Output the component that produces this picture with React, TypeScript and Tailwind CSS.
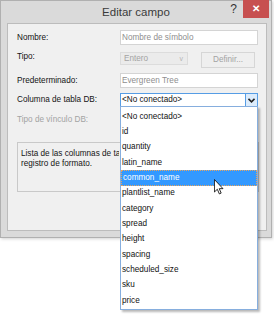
const items = [
  "<No conectado>",
  "id",
  "quantity",
  "latin_name",
  "common_name",
  "plantlist_name",
  "category",
  "spread",
  "height",
  "spacing",
  "scheduled_size",
  "sku",
  "price",
];

const Row = ({ label, disabled, children, className }: { label: string; disabled?: boolean; children?: React.ReactNode; className: string }) => (
  <div className={`flex items-center ${className}`}>
    <div className={`w-[103px] shrink-0 pl-[9px] box-content ${disabled ? "text-[#a3a3a3]" : "text-[#141414]"}`}>{label}</div>
    {children}
  </div>
);

const App = () => {
  return (
    <div className="min-h-screen bg-white text-[8.2px] leading-[10px]" style={{ fontFamily: '"Liberation Sans", Arial, sans-serif' }}>
      <div className="relative w-[272px] h-[238px] bg-[#dadada] border border-[#b0b0b0] shadow-[1px_1px_3px_rgba(0,0,0,0.18)]">
        {/* title bar */}
        <div className="h-[22px] flex items-center justify-center text-[11.5px] text-[#3a3a3a]">Editar campo</div>
        <div className="absolute top-[1px] right-[34px] text-[12px] leading-[14px] text-[#333]">?</div>
        <div className="absolute top-[-1px] right-[2px] w-[26px] h-[18px] bg-[#c75050] flex items-center justify-center text-white text-[10px] font-bold">✕</div>

        {/* content */}
        <div className="ml-[6px] w-[260px] h-[208px] border border-[#bcbcbc] bg-[#f0f0f0]">
          <Row label="Nombre:" className="mt-[6px] h-[15px]">
            <div className="w-[138px] h-[15px] border border-[#d4d4d4] bg-white flex items-center pl-[1px] text-[#8e8e8e]">Nombre de símbolo</div>
          </Row>
          <Row label="Tipo:" className="mt-[7px] h-[16px] items-start">
            <div className="w-[68px] h-[13px] border border-[#dcdcdc] bg-[#ebebeb] flex items-center justify-between pl-[3px] pr-[4px] text-[#a3a3a3]">
              <span>Entero</span>
              <span className="text-[7px] text-[#b5b5b5]">v</span>
            </div>
            <div className="ml-[13px] w-[54px] h-[16px] border border-[#d6d6d6] bg-[#efefef] flex items-center justify-center text-[#a3a3a3]">Definir...</div>
          </Row>
          <Row label="Predeterminado:" className="mt-[5px] h-[15px]">
            <div className="w-[138px] h-[15px] border border-[#d4d4d4] bg-white flex items-center pl-[1px] text-[#8e8e8e]">Evergreen Tree</div>
          </Row>
          <Row label="Columna de tabla DB:" className="mt-[5px] h-[14px]">
            <div className="relative w-[138px] h-[14px] border border-[#569de5] bg-white flex items-center">
              <span className="flex-1 pl-[1px] text-[#111]">&lt;No conectado&gt;</span>
              <span className="w-[12px] h-full bg-[#dcecfc] border-l border-[#569de5] flex items-center justify-center">
                <svg width="7" height="5" viewBox="0 0 7 5"><path d="M0.5 0.8 L3.5 3.8 L6.5 0.8" fill="none" stroke="#222" strokeWidth="1.6" /></svg>
              </span>
              {/* dropdown list */}
              <div className="absolute left-[-1px] top-[12px] z-10 w-[138px] h-[204px] border border-[#86aede] bg-white pt-[2px] shadow-[2px_2px_2px_rgba(0,0,0,0.28)]">
                {items.map((it) =>
                  it === "common_name" ? (
                    <div key={it} className="h-[15.35px] flex items-center pl-[1px] bg-[#3399ff] text-white border border-dotted border-[#e9a45c]">{it}</div>
                  ) : (
                    <div key={it} className="h-[15.35px] flex items-center pl-[1px] text-[#111]">{it}</div>
                  )
                )}
              </div>
            </div>
          </Row>
          <Row label="Tipo de vínculo DB:" disabled className="mt-[6px] h-[14px]" />
          <div className="ml-[9px] mt-[15px] w-[242px] h-[50px] border border-[#c9c9c9] pl-[3px] pt-[6px] text-[#141414]">
            <div className="w-[98px] overflow-hidden whitespace-nowrap">
              <div>Lista de las columnas de tabla DB vinculadas al</div>
              <div>registro de formato.</div>
            </div>
          </div>
        </div>

        {/* mouse pointer */}
        <svg className="absolute left-[213px] top-[178px] z-20" width="10" height="16" viewBox="0 0 12 19">
          <path d="M0.5 0.5 L0.5 15.5 L4 12.2 L6.4 17.8 L8.6 16.8 L6.3 11.5 L10.8 11.5 Z" fill="white" stroke="black" strokeWidth="1" strokeLinejoin="round" />
        </svg>
      </div>
    </div>
  );
};

export default App;
